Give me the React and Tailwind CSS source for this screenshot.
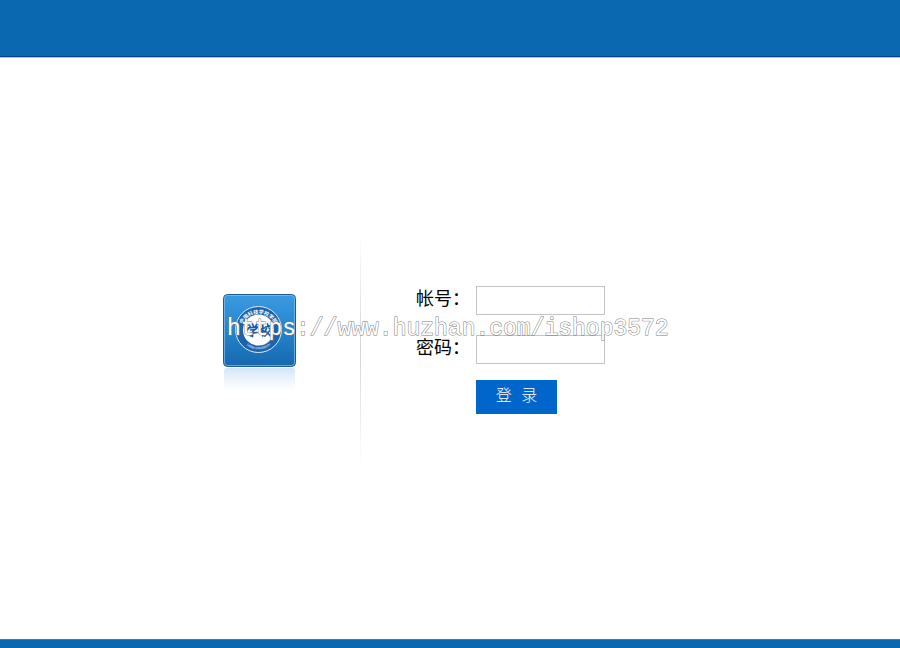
import { useState } from 'react';

const WATERMARK = 'https://www.huzhan.com/ishop3572';

function SchoolLogo() {
  return (
    <div className="w-[73px]">
      <svg viewBox="0 0 73 98" className="block w-full" role="img" aria-label="学校">
        <defs>
          <linearGradient id="tile" x1="0" y1="0" x2="0" y2="1">
            <stop offset="0" stopColor="#3b9ae0" />
            <stop offset="0.5" stopColor="#2584cd" />
            <stop offset="1" stopColor="#1668ae" />
          </linearGradient>
          <linearGradient id="mirror" x1="0" y1="0" x2="0" y2="1">
            <stop offset="0" stopColor="#d3e5f6" />
            <stop offset="0.5" stopColor="#edf5fc" />
            <stop offset="1" stopColor="#ffffff" />
          </linearGradient>
          <path id="arcTop" d="M18 42 A18 18 0 1 1 53 42" />
          <path id="arcBottom" d="M18 45 A20 20 0 0 0 53 45" />
        </defs>
        <rect x="1" y="74" width="71" height="23" rx="3" fill="url(#mirror)" />
        <rect x="0.5" y="0.5" width="72" height="72" rx="4" fill="url(#tile)" stroke="#185d96" />
        <rect x="1.5" y="1.5" width="70" height="70" rx="3" fill="none" stroke="#7dbdec" strokeOpacity="0.75" />
        <circle cx="35.5" cy="35.5" r="23" fill="#1c63ac" stroke="#d9eaf8" strokeWidth="1" />
        <circle cx="35.5" cy="36" r="15.5" fill="#fff" />
        <g fill="#fff" fontFamily="'Noto Sans CJK SC', sans-serif">
          <text fontSize="5" fontWeight="700">
            <textPath href="#arcTop" startOffset="50%" textAnchor="middle">中国科技学校学院</textPath>
          </text>
          <text fontSize="3">
            <textPath href="#arcBottom" startOffset="50%" textAnchor="middle">CHINA UNIVERSITY</textPath>
          </text>
        </g>
        {/* brush style emblem */}
        <g fill="none" stroke="#1c5da6" strokeWidth="1.7" strokeLinecap="round" strokeLinejoin="round">
          <path d="M26 31l1.5 2M29.5 30l1 2.5M34 30l-2 3M24.5 36l1-2.2 9-.8-1.5 2M27.5 36l4.5-.5-2.5 2.5M24.5 40l9.5-1.5M29.5 38v4.5l-2-.8" />
          <path d="M37.5 35l4-1M39.8 31v11M39.5 35.5l-2.5 4M41 37l1 1M42.5 33l5-1.2M44.5 30l.8 2M43.5 34.5l-1 1.8M46 34l1.5 1.5M46.5 37l-4.5 5M43 37.5l4.5 4.5" />
        </g>
      </svg>
    </div>
  );
}

function Field({ id, label, type, value, onChange }) {
  return (
    <div className="flex items-center">
      <label htmlFor={id} className="w-[60px] shrink-0 pb-1.5 text-[18px] leading-6 text-black">
        {label}
      </label>
      <input
        id={id}
        type={type}
        value={value}
        onChange={(e) => onChange(e.target.value)}
        className="h-[29px] w-[129px] border border-[#c4c4c4] bg-white px-1 text-sm outline-none focus:border-[#0066cc]"
      />
    </div>
  );
}

export default function App() {
  const [account, setAccount] = useState('');
  const [password, setPassword] = useState('');

  return (
    <div className="flex min-h-screen flex-col bg-white font-['Noto_Sans_CJK_SC',sans-serif]">
      <header className="h-[58px] border-b border-[#a9c9f0] bg-[#0a68b0]">
        <div className="h-full border-b border-[#063f8c]" />
      </header>

      <main className="flex flex-1 items-center justify-center">
        <div className="relative flex items-center pt-0.5">
          <div className="w-[137px] pb-3.5">
            <SchoolLogo />
          </div>
          <div className="h-[232px] w-px bg-linear-to-b from-white via-[#d4d4d4] to-white" />
          <form className="flex w-[316px] flex-col gap-4 pl-[55px]" onSubmit={(e) => e.preventDefault()}>
            <div className="flex flex-col gap-[19px]">
              <Field id="account" label="帐号：" type="text" value={account} onChange={setAccount} />
              <Field id="password" label="密码：" type="password" value={password} onChange={setPassword} />
            </div>
            <button
              type="submit"
              className="ml-[60px] h-[34px] w-[81px] cursor-pointer bg-[#0066cc] font-['Liberation_Mono','Noto_Sans_CJK_SC',monospace] text-base font-light text-white"
            >
              登 录
            </button>
          </form>

          <p className="pointer-events-none absolute inset-x-0 top-1/2 -translate-y-full pb-1 pl-1 font-['Liberation_Mono',monospace] text-[23px] leading-8 whitespace-nowrap text-white [-webkit-text-stroke:1px_#7c7c7c] [paint-order:stroke_fill]">
            {WATERMARK}
          </p>
        </div>
      </main>

      <footer className="h-[9px] border-t border-[#3d7f9c] bg-[#0a68b0]" />
    </div>
  );
}
